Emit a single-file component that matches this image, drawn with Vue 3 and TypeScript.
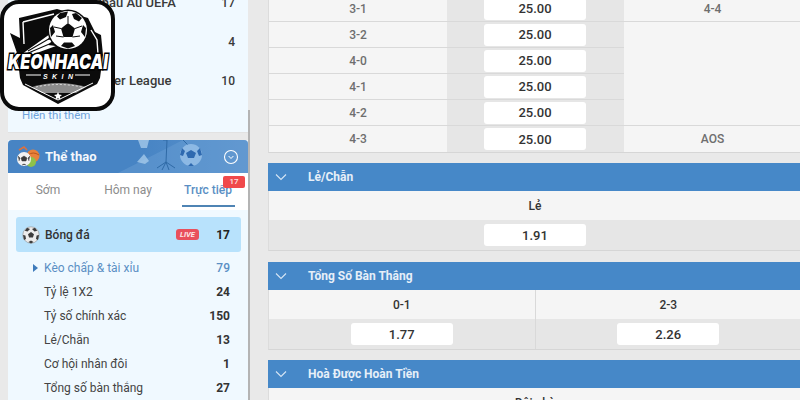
<script setup lang="ts">
interface Row { label: string; odds: string; right: string; open: boolean }
const tableRows: Row[] = [
  { label: '3-1', odds: '25.00', right: '4-4', open: false },
  { label: '3-2', odds: '25.00', right: '', open: true },
  { label: '4-0', odds: '25.00', right: '', open: true },
  { label: '4-1', odds: '25.00', right: '', open: true },
  { label: '4-2', odds: '25.00', right: '', open: false },
  { label: '4-3', odds: '25.00', right: 'AOS', open: false },
]
const markets = [
  { title: 'Lẻ/Chẵn', cells: [{ label: 'Lẻ', odds: '1.91' }] },
  { title: 'Tổng Số Bàn Thắng', cells: [{ label: '0-1', odds: '1.77' }, { label: '2-3', odds: '2.26' }] },
  { title: 'Hoà Được Hoàn Tiền', cells: [{ label: 'Đội nhà', odds: '' }] },
]
const leagues = [
  { name: 'Vòng Loại Châu Âu UEFA', count: 17 },
  { name: 'Cúp Quốc Gia', count: 4 },
  { name: 'Giải Premier League', count: 10 },
]
const menu = [
  { name: 'Kèo chấp & tài xỉu', count: 79, active: true },
  { name: 'Tỷ lệ 1X2', count: 24, active: false },
  { name: 'Tỷ số chính xác', count: 150, active: false },
  { name: 'Lẻ/Chẵn', count: 13, active: false },
  { name: 'Cơ hội nhân đôi', count: 1, active: false },
  { name: 'Tổng số bàn thắng', count: 27, active: false },
]
</script>

<template>
  <div class="page">
    <aside class="sidebar">
      <div class="sidebar-col">
        <section class="league-card">
          <div v-for="l in leagues" :key="l.name" class="league-row">
            <span>{{ l.name }}</span><b>{{ l.count }}</b>
          </div>
          <a class="more">Hiển thị thêm</a>
        </section>

        <section class="sport-card">
          <header class="sport-head">
            <svg class="sport-deco" width="240" height="33" viewBox="0 0 240 33">
              <path d="M110 33 L175 0 H240 V33 Z" fill="#6a9fd4" opacity=".45" />
              <path d="M130 0 l11 0 -2 8 -6 0 Z" fill="#a9cdec" opacity=".75" />
              <path d="M129 22 l7 -8 5 7 -4 3 Z" fill="#a9cdec" opacity=".75" />
              <path d="M155 0 l4 0 -1 22 M158 22 l-9 6 M158 22 l-4 8 M158 22 l3 8 M158 22 l9 6 M175 0 l8 8" stroke="#2f6aa6" stroke-width="1" fill="none" />
              <circle cx="183" cy="15" r="11" fill="#8db9e4" />
              <path d="M183 10 l5 3 -2 5 h-6 l-2 -5 Z M174 8 l3 3 -2 5 -3 -1 M192 8 l-3 3 2 5 3 -1 M180 26 l3 -3 3 3" fill="#2f6ab0" />
              <circle cx="223" cy="17" r="6.5" fill="none" stroke="#fff" stroke-width="1.1" />
              <path d="M220.6 16 L223 18.5 L225.4 16" fill="none" stroke="#fff" stroke-width="1" />
            </svg>
            <svg class="sport-icon" width="24" height="24" viewBox="0 0 24 24">
              <circle cx="17" cy="11" r="6.5" fill="#e8813a" />
              <path d="M12 10 q5 -4 11 0" stroke="#b9541c" fill="none" />
              <circle cx="15" cy="17" r="5" fill="#8fc24a" />
              <path d="M3 5 l5 -3 3 3" stroke="#e2703a" stroke-width="1.5" fill="none" />
              <circle cx="8" cy="14" r="7" fill="#f2f2f2" />
              <path d="M8 11 l3 2 -1 3 h-4 l-1 -3 Z M2 11 l2 2 -1 3 M14 11 l-2 2 1 3 M6 20 l2 -1 2 1" fill="#3a3a3a" stroke="#3a3a3a" stroke-width=".5" />
            </svg>
            <span class="sport-title">Thể thao</span>
          </header>

          <nav class="tabs">
            <span class="tab">Sớm</span>
            <span class="tab">Hôm nay</span>
            <span class="tab tab-on">Trực tiếp<em class="tab-badge">17</em></span>
          </nav>

          <div class="sport-body">
            <div class="ball-row">
              <svg width="18" height="18" viewBox="0 0 18 18">
                <circle cx="9" cy="9" r="8.2" fill="#ececec" stroke="#8f8f8f" stroke-width=".6" />
                <path d="M9 6 l3 2.2 -1.1 3.4 h-3.8 L6 8.2 Z M5 1.8 L8 3 5.5 5.4 2.8 4.8 Z M13 1.8 L10 3 12.5 5.4 15.2 4.8 Z M1 9 l2.4 .6 .6 3.4 -2 1 Z M17 9 l-2.4 .6 -.6 3.4 2 1 Z M6.5 16 l2.5 -1.6 2.5 1.6 -2.5 1.4 Z" fill="#3c3c3c" />
              </svg>
              <span class="ball-name">Bóng đá</span>
              <em class="live">LIVE</em>
              <b class="ball-count">17</b>
            </div>
            <div v-for="m in menu" :key="m.name" class="menu-row" :class="{ 'menu-on': m.active }">
              <span>{{ m.name }}</span><b>{{ m.count }}</b>
            </div>
          </div>
        </section>
      </div>
      <div class="scroll-thumb"></div>
    </aside>

    <main class="main">
      <section class="score-table">
        <div v-for="r in tableRows" :key="r.label" class="score-row">
          <div class="cell">{{ r.label }}</div>
          <div class="cell cell-odds"><span class="odds">{{ r.odds }}</span></div>
          <div class="cell" :class="{ 'cell-open': r.open }">{{ r.right }}</div>
        </div>
      </section>

      <section v-for="m in markets" :key="m.title" class="market">
        <header class="market-head">
          <svg width="12" height="8" viewBox="0 0 12 8"><path d="M1 1.5 L6 6.5 L11 1.5" fill="none" stroke="#d7e6f4" stroke-width="1.1" /></svg>
          <span>{{ m.title }}</span>
        </header>
        <div class="market-grid">
          <div v-for="c in m.cells" :key="c.label" class="market-cell">
            <div class="market-label">{{ c.label }}</div>
            <div class="market-odds"><span class="odds">{{ c.odds }}</span></div>
          </div>
        </div>
      </section>
    </main>

    <div class="logo">
      <svg width="115" height="111" viewBox="0 0 115 111">
        <rect x="2" y="2" width="111" height="107" rx="17" fill="#fff" stroke="#0a0a0a" stroke-width="4" />
        <!-- shield silhouette -->
        <path d="M19 18 L57 9 L88 18 L95 32 L101 35 L103 55 L100 78 L97 84 L58 104 L23 85 L20 78 L17 53 L10 33 L20 38 Z" fill="#0b0b0b" />
        <!-- inner white contour -->
        <path d="M23 22 L54 14 M23 22 L24 44 M91 30 L97 40 L98 54" stroke="#fff" stroke-width="1.4" fill="none" />
        <!-- speed streaks -->
        <path d="M22 54 L50 34 L48 40 L54 39 L48 45 L56 46 L34 54 Z" fill="#fff" />
        <path d="M28 51 L52 37 M26 54 L54 42 M38 54 L56 48" stroke="#0b0b0b" stroke-width="1.1" />
        <!-- ball -->
        <circle cx="68" cy="30" r="20.5" fill="#0b0b0b" />
        <circle cx="68" cy="30" r="19" fill="#fff" />
        <path d="M68 23 L75 28.5 L72.5 37 L63.5 37 L61 28.5 Z" fill="#0b0b0b" />
        <path d="M60 13 L68 11.5 L66 17 L60 19.5 L57 16.5 Z M76 13 L82 18 L79 21.5 L74 19 L72 14 Z M50 28 L53 25 L55 32 L51 37 Z M86 28 L83 25 L81 32 L85 37 Z M61 46 L64 42.5 L72 42.5 L75 46 L68 48.5 Z" fill="#0b0b0b" />
        <path d="M68 23 V16 M61 28.5 L54 27 M75 28.5 L82 26 M63.5 37 L56 36 M72.5 37 L80 36" stroke="#0b0b0b" stroke-width="1" />
        <!-- stadium -->
        <path d="M32 87 Q58 79 86 87 L76 93 H42 Z" fill="#8c8c8c" />
        <path d="M36 87 Q58 82 82 87" stroke="#e0e0e0" stroke-width="1" stroke-dasharray="2 2" fill="none" />
        <path d="M25 84 L58 100 L93 83" stroke="#fff" stroke-width="1" fill="none" />
        <path d="M58 92 l1.2 2.6 2.8 .3 -2.1 1.9 .6 2.8 -2.5 -1.4 -2.5 1.4 .6 -2.8 -2.1 -1.9 2.8 -.3 Z" fill="#fff" />
        <!-- wordmark -->
        <text class="logo-word" x="58" y="69" text-anchor="middle" textLength="100" lengthAdjust="spacingAndGlyphs">KEONHACAI</text>
        <path d="M26 75 H41 M75 75 H90" stroke="#fff" stroke-width="1.2" />
        <text class="logo-skin" x="58" y="78.5" text-anchor="middle" textLength="30">SKIN</text>
      </svg>
    </div>
  </div>
</template>

<style>
html, body { margin: 0; background: #e9e9e9; }
</style>

<style scoped>
.page {
  position: relative;
  display: flex;
  width: 800px;
  height: 400px;
  overflow: hidden;
  background: #e9e9e9;
  font-family: Roboto, "Liberation Sans", sans-serif;
  font-size: 12px;
  color: #333;
}
.sidebar {
  display: flex;
  flex: none;
  width: 268px;
  padding-left: 8px;
  box-sizing: border-box;
}
.sidebar-col { flex: none; width: 240px; }
.scroll-thumb {
  flex: none;
  width: 2px;
  height: 290px;
  margin-top: 110px;
  background: #b4b4b4;
}
.league-card {
  height: 133px;
  margin-bottom: 7px;
  padding: 0 13px 0 14px;
  box-sizing: border-box;
  background: #f0f9ff;
  border-bottom: 1px solid #e2e2e2;
  overflow: hidden;
}
.league-row {
  display: flex;
  justify-content: space-between;
  align-items: center;
  height: 39px;
  font-weight: 500;
  color: #3a3a3a;
}
.league-row:first-child { margin-top: -17px; }
.league-row span { width: 100%; padding-left: 6px; font-size: 13px; }
.league-row:nth-child(3) span { padding-left: 32px; }
.league-row:first-child span { padding-left: 10px; }
.league-row b { font-weight: 500; }
.more {
  display: block;
  margin-top: 8px;
  color: #6fa3dc;
  font-size: 11.5px;
}
.sport-card { background: #f0f9ff; }
.sport-head {
  position: relative;
  display: flex;
  align-items: center;
  gap: 5px;
  height: 33px;
  padding-left: 8px;
  border-radius: 4px 4px 0 0;
  background: linear-gradient(90deg, #4784c4 0%, #4784c4 55%, #5b93cd 100%);
  overflow: hidden;
}
.sport-deco { position: absolute; left: 0; top: 0; }
.sport-icon { position: relative; }
.sport-title { position: relative; color: #f4f8fc; font-size: 13px; font-weight: 700; }
.tabs {
  display: grid;
  grid-template-columns: 80px 80px 80px;
  height: 37px;
  background: #fff;
}
.tab {
  position: relative;
  display: flex;
  align-items: center;
  justify-content: center;
  height: 34px;
  color: #8c8c8c;
}
.tab-on { color: #5b8fc4; font-weight: 500; }
.tab-on::after {
  content: "";
  position: absolute;
  left: 14px;
  right: 13px;
  bottom: 0;
  height: 2px;
  background: #4f84b4;
}
.tab-badge {
  position: absolute;
  top: 3px;
  right: 3px;
  width: 22px;
  height: 12px;
  border-radius: 2px;
  background: #f0494b;
  color: #fbe4e4;
  font-size: 8px;
  font-style: normal;
  line-height: 12px;
  text-align: center;
}
.sport-body { padding: 7px 11px 0 8px; }
.ball-row {
  display: flex;
  align-items: center;
  height: 35px;
  padding: 0 11px 0 6px;
  margin-right: -4px;
  margin-bottom: 4px;
  border-radius: 3px;
  background: #b8e2fc;
}
.ball-name { margin-left: 5px; font-weight: 500; color: #333; }
.live {
  margin-left: auto;
  width: 23px;
  height: 11px;
  border-radius: 3px;
  background: #e9505c;
  color: #fde8e8;
  font-size: 7.5px;
  font-weight: 700;
  line-height: 11px;
  text-align: center;
}
.ball-count { width: 31px; text-align: right; font-weight: 700; color: #222; }
.menu-row {
  display: flex;
  justify-content: space-between;
  align-items: center;
  position: relative;
  height: 24px;
  padding-left: 28px;
  padding-right: 7px;
  margin-right: 0;
  color: #444;
}
.menu-row b { font-weight: 700; color: #333; }
.menu-on { color: #5b8fc4; }
.menu-on b { color: #5b8fc4; font-weight: 500; }
.menu-on::before {
  content: "";
  position: absolute;
  left: 17px;
  top: 8px;
  border-left: 5px solid #3f7bbb;
  border-top: 4px solid transparent;
  border-bottom: 4px solid transparent;
}
.main {
  flex: none;
  width: 533px;
  margin-top: -4px;
}
.score-table {
  border-left: 1px solid #dcdcdc;
  border-bottom: 1px solid #d6d6d6;
  background: #f5f5f5;
}
.score-row {
  display: grid;
  grid-template-columns: 178px 177px 177px;
}
.cell {
  display: flex;
  align-items: center;
  justify-content: center;
  height: 26px;
  box-sizing: border-box;
  border-bottom: 1px solid #d9d9d9;
  color: #6e6e6e;
  font-weight: 500;
  font-size: 12px;
}
.cell-odds { background: #e6e6e6; padding-right: 1px; }
.cell-open { border-bottom: 0; }
.score-row:last-child .cell { border-bottom: 0; }
.odds {
  display: flex;
  align-items: center;
  justify-content: center;
  width: 102px;
  height: 22px;
  border-radius: 3px;
  background: #fff;
  color: #333;
  font-size: 13px;
  font-weight: 500;
}
.market { margin-top: 11px; }
.market:nth-child(2), .market:last-child { margin-top: 10px; }
.market-head {
  display: flex;
  align-items: center;
  gap: 21px;
  height: 28px;
  padding-left: 7px;
  background: #4688c8;
  color: #e6eff8;
  font-size: 12px;
  font-weight: 700;
}
.market-grid {
  display: flex;
  border-left: 1px solid #dcdcdc;
  border-bottom: 1px solid #d6d6d6;
}
.market-cell { flex: 1; }
.market-cell + .market-cell { border-left: 1px solid #d9d9d9; }
.market-label {
  height: 29px;
  background: #f5f5f5;
  color: #333;
  font-weight: 500;
  text-align: center;
  line-height: 30px;
}
.market-odds {
  display: flex;
  justify-content: center;
  align-items: center;
  height: 30px;
  background: #e6e6e6;
}
.logo {
  position: absolute;
  left: 0;
  top: 0;
  width: 115px;
  height: 111px;
}
.logo svg { display: block; }
.logo-word {
  font-family: Inter, "Liberation Sans", sans-serif;
  font-size: 20px;
  font-weight: 900;
  font-style: italic;
  fill: #fff;
  stroke: #000;
  stroke-width: 3px;
  paint-order: stroke;
}
.logo-skin {
  font-family: "Liberation Sans", sans-serif;
  font-size: 7px;
  font-weight: 700;
  font-style: italic;
  fill: #fff;
}
</style>
